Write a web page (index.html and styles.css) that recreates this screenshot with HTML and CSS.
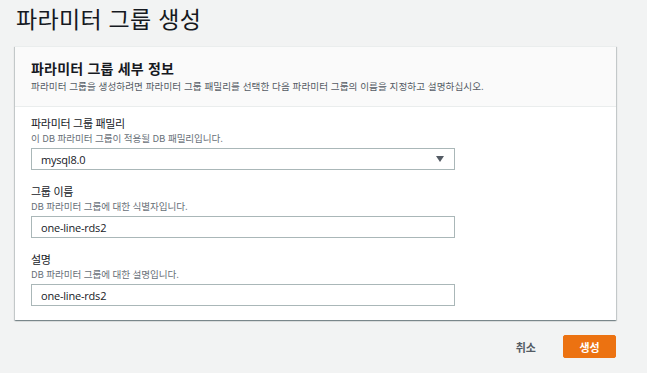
FILE: index.html
```
<!DOCTYPE html>
<html lang="ko">
<head>
<meta charset="utf-8">
<link rel="stylesheet" href="styles.css">
</head>
<body>
<h1 class="page-title">파라미터 그룹 생성</h1>
<section class="card">
  <header class="card-header">
    <h2 class="card-title">파라미터 그룹 세부 정보</h2>
    <p class="card-desc">파라미터 그룹을 생성하려면 파라미터 그룹 패밀리를 선택한 다음 파라미터 그룹의 이름을 지정하고 설명하십시오.</p>
  </header>
  <div class="card-body">
    <div class="field">
      <div class="label">파라미터 그룹 패밀리</div>
      <div class="hint">이 DB 파라미터 그룹이 적용될 DB 패밀리입니다.</div>
      <div class="input select"><span class="value">mysql8.0</span><span class="caret"></span></div>
    </div>
    <div class="field">
      <div class="label">그룹 이름</div>
      <div class="hint">DB 파라미터 그룹에 대한 식별자입니다.</div>
      <div class="input"><span class="value">one-line-rds2</span></div>
    </div>
    <div class="field">
      <div class="label">설명</div>
      <div class="hint">DB 파라미터 그룹에 대한 설명입니다.</div>
      <div class="input"><span class="value">one-line-rds2</span></div>
    </div>
  </div>
</section>
<div class="actions">
  <button class="btn btn-link">취소</button>
  <button class="btn btn-primary">생성</button>
</div>
</body>
</html>
```
FILE: styles.css
```
* { box-sizing: border-box; }
html, body { margin: 0; }
body {
  background: #f2f3f3;
  width: 647px;
  height: 373px;
  overflow: hidden;
  padding: 0 31px 0 15px;
  font-family: "Open Sans", "Noto Sans CJK KR", sans-serif;
  color: #16191f;
}
.page-title {
  margin: 0;
  padding: 2px 0 0 1px;
  height: 46px;
  font-family: "Noto Sans CJK KR", sans-serif;
  font-weight: 400;
  font-size: 23px;
  line-height: 32px;
  letter-spacing: 0.3px;
}
.card {
  background: #fff;
  border-top: 1px solid #eaeded;
  box-shadow: 0 1px 1px 0 rgba(0,28,36,.3), 1px 1px 1px 0 rgba(0,28,36,.15), -1px 1px 1px 0 rgba(0,28,36,.15);
}
.card-header {
  background: #fafafa;
  border-bottom: 1px solid #eaeded;
  padding: 11px 16px 0;
  height: 60px;
}
.card-title {
  margin: 0;
  font-family: "Noto Sans CJK KR", sans-serif;
  font-size: 14px;
  font-weight: 700;
  line-height: 20px;
  letter-spacing: 0.2px;
}
.card-desc {
  margin: 1px 0 0;
  font-family: "Noto Sans CJK KR", sans-serif;
  font-size: 9.6px;
  line-height: 14px;
  color: #545b64;
  letter-spacing: 0.05px;
}
.card-body {
  padding: 9px 16px 14px;
  display: flex;
  flex-direction: column;
  gap: 14px;
}
.label {
  font-family: "Noto Sans CJK KR", sans-serif;
  font-size: 11px;
  line-height: 15px;
  letter-spacing: -0.3px;
}
.hint {
  font-family: "Noto Sans CJK KR", sans-serif;
  font-size: 9.6px;
  line-height: 14px;
  color: #687078;
  letter-spacing: -0.1px;
}
.input {
  margin-top: 3px;
  width: 424px;
  height: 22px;
  border: 1px solid #aab7b8;
  background: #fff;
  display: flex;
  align-items: center;
  padding: 0 9px;
  font-size: 11px;
  letter-spacing: -0.2px;
}
.select { justify-content: space-between; padding-right: 10px; }
.caret {
  width: 0; height: 0;
  border-left: 4px solid transparent;
  border-right: 4px solid transparent;
  border-top: 6px solid #545b64;
}
.actions {
  margin-top: 15px;
  display: flex;
  justify-content: flex-end;
  align-items: center;
  gap: 6px;
}
.btn {
  font-family: "Noto Sans CJK KR", sans-serif;
  font-size: 11px;
  font-weight: 700;
  height: 23px;
  border-radius: 2px;
  border: 1px solid transparent;
  cursor: pointer;
  padding: 0 15px;
}
.btn-link { background: transparent; color: #545b64; padding: 0 20px; }
.btn-primary { background: #ec7211; border-color: #ec7211; color: #fff; width: 53px; }
```
